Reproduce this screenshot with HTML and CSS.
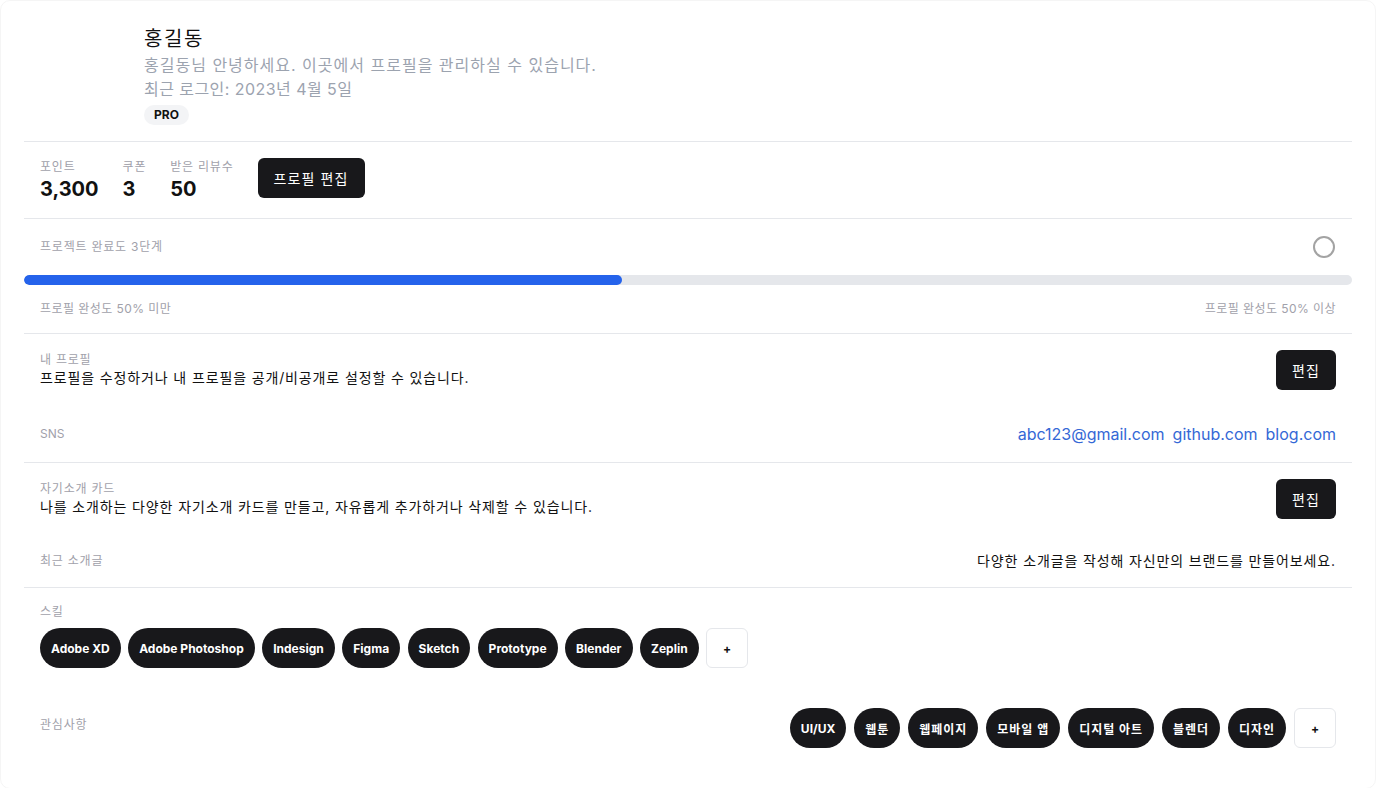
FILE: index.html
```html
<!DOCTYPE html>
<html lang="ko">
<head>
<meta charset="utf-8">
<title>프로필</title>
<link rel="stylesheet" href="styles.css">
</head>
<body>
<div class="card">
  <section class="header">
    <div class="avatar"></div>
    <div class="intro">
      <h1 class="name">홍길동</h1>
      <p class="sub">홍길동님 안녕하세요. 이곳에서 프로필을 관리하실 수 있습니다.</p>
      <p class="sub login">최근 로그인: 2023년 4월 5일</p>
      <span class="badge">PRO</span>
    </div>
  </section>

  <section class="stats">
    <div class="stat"><span class="label">포인트</span><span class="value">3,300</span></div>
    <div class="stat"><span class="label">쿠폰</span><span class="value">3</span></div>
    <div class="stat"><span class="label">받은 리뷰수</span><span class="value">50</span></div>
    <button class="btn">프로필 편집</button>
  </section>

  <section class="progress">
    <div class="row pad">
      <span class="label">프로젝트 완료도 3단계</span>
      <svg class="circle" width="24" height="24" viewBox="0 0 24 24"><circle cx="12" cy="12" r="10" fill="none" stroke="#a3a3a3" stroke-width="2"/></svg>
    </div>
    <div class="bar"><div class="fill" style="width:45%"></div></div>
    <div class="row pad">
      <span class="label mixed">프로필 완성도 50% 미만</span>
      <span class="label mixed">프로필 완성도 50% 이상</span>
    </div>
  </section>

  <section class="block">
    <div class="row">
      <div class="col">
        <span class="label">내 프로필</span>
        <span class="text">프로필을 수정하거나 내 프로필을 공개/비공개로 설정할 수 있습니다.</span>
      </div>
      <button class="btn">편집</button>
    </div>
    <div class="row sub-row sns">
      <span class="label latin">SNS</span>
      <div class="links">
        <a href="#">abc123@gmail.com</a>
        <a href="#">github.com</a>
        <a href="#">blog.com</a>
      </div>
    </div>
  </section>

  <section class="block">
    <div class="row">
      <div class="col">
        <span class="label">자기소개 카드</span>
        <span class="text">나를 소개하는 다양한 자기소개 카드를 만들고, 자유롭게 추가하거나 삭제할 수 있습니다.</span>
      </div>
      <button class="btn">편집</button>
    </div>
    <div class="row sub-row">
      <span class="label">최근 소개글</span>
      <span class="text">다양한 소개글을 작성해 자신만의 브랜드를 만들어보세요.</span>
    </div>
  </section>

  <section class="skills">
    <span class="label">스킬</span>
    <div class="chips skill-chips">
      <span class="chip">Adobe XD</span>
      <span class="chip">Adobe Photoshop</span>
      <span class="chip">Indesign</span>
      <span class="chip">Figma</span>
      <span class="chip">Sketch</span>
      <span class="chip">Prototype</span>
      <span class="chip">Blender</span>
      <span class="chip">Zeplin</span>
      <button class="add">+</button>
    </div>
    <div class="interests">
      <span class="label">관심사항</span>
      <div class="chips">
        <span class="chip">UI/UX</span>
        <span class="chip ko">웹툰</span>
        <span class="chip ko">웹페이지</span>
        <span class="chip ko">모바일 앱</span>
        <span class="chip ko">디지털 아트</span>
        <span class="chip ko">블렌더</span>
        <span class="chip ko">디자인</span>
        <button class="add">+</button>
      </div>
    </div>
  </section>
</div>
</body>
</html>
```

FILE: styles.css
```css
* { box-sizing: border-box; }
html, body { margin: 0; padding: 0; background: #fff; }
body {
  font-family: Inter, "Noto Sans CJK KR", sans-serif;
  color: #111111;
}
.card {
  width: 1376px;
  min-height: 788px;
  border: 1px solid #f5f5f5;
  border-radius: 10px;
  padding: 0 23px 40px;
}
p, h1 { margin: 0; }

.header {
  display: flex;
  gap: 8px;
  padding: 24px 16px 16px;
  border-bottom: 1px solid #e5e7eb;
}
.avatar { width: 96px; flex: none; }
.intro { display: flex; flex-direction: column; align-items: flex-start; }
.name { font-size: 20px; line-height: 28px; font-weight: 400; color: #111; letter-spacing: 0.08em; }
.sub { font-size: 16px; line-height: 24px; color: #9ca3af; letter-spacing: 0.0625em; }
.sub.login { letter-spacing: 0.028em; }
.badge {
  margin-top: 4px;
  background: #f3f4f6;
  border-radius: 999px;
  padding: 2px 10px;
  font-size: 12px;
  line-height: 16px;
  font-weight: 700;
  color: #111;
}

.label { display: block; font-size: 12px; line-height: 16px; color: #a1a1aa; letter-spacing: 0.065em; }
.label.mixed { letter-spacing: 0.036em; }
.label.latin { letter-spacing: 0; }
.text { display: block; font-size: 14px; line-height: 20px; color: #111; letter-spacing: 0.062em; }

.stats {
  display: flex;
  align-items: flex-start;
  gap: 24px;
  padding: 16px 16px 15px;
  border-bottom: 1px solid #e5e7eb;
}
.stat { display: flex; flex-direction: column; padding-top: 1px; }
.value { font-size: 20px; line-height: 28px; font-weight: 700; color: #111; }

.btn {
  height: 40px;
  padding: 0 16px;
  background: #18181b;
  color: #fff;
  border: none;
  border-radius: 6px;
  font-family: inherit;
  font-size: 14px;
  letter-spacing: 0.08em;
  flex: none;
}

.progress {
  padding: 16px 0;
  border-bottom: 1px solid #e5e7eb;
}
.row { display: flex; justify-content: space-between; align-items: center; }
.pad { padding: 0 16px; }
.circle { display: block; }
.bar {
  margin: 16px 0;
  height: 10px;
  border-radius: 5px;
  background: #e5e7eb;
  overflow: hidden;
}
.fill { height: 100%; background: #2563eb; border-radius: 5px; }

.block {
  padding: 16px;
  border-bottom: 1px solid #e5e7eb;
}
.col { display: flex; flex-direction: column; }
.sub-row { margin-top: 32px; }
.sns { height: 24px; }
.links { display: flex; gap: 8px; }
.links a { color: #3468d6; text-decoration: none; font-size: 16px; line-height: 24px; }

.skills { padding: 16px 16px 0; }
.chips { display: flex; gap: 8px; margin-top: 8px; }
.skill-chips { gap: 7.5px; }
.chip {
  height: 40px;
  display: inline-flex;
  align-items: center;
  padding: 0 11px;
  background: #18181b;
  color: #fff;
  border-radius: 999px;
  font-size: 12px;
  font-weight: 700;
  white-space: nowrap;
}
.chip.ko { letter-spacing: 0.08em; }
.add {
  width: 42px;
  height: 40px;
  background: #fff;
  border: 1px solid #e5e7eb;
  border-radius: 6px;
  font-family: inherit;
  font-size: 12px;
  font-weight: 700;
  color: #111;
}
.interests {
  display: flex;
  justify-content: space-between;
  align-items: flex-start;
  margin-top: 40px;
}
.interests .chips { margin-top: 0; }
.interests .label { padding-top: 9px; }
```
